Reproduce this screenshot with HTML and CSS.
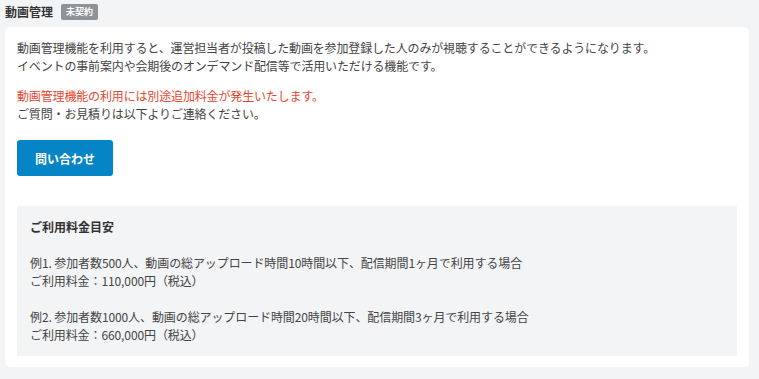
FILE: index.html
```html
<!DOCTYPE html>
<html lang="ja">
<head>
<meta charset="utf-8">
<link rel="stylesheet" href="styles.css">
</head>
<body>
<div class="page">
  <div class="header">
    <h2 class="title">動画管理</h2>
    <span class="badge">未契約</span>
  </div>
  <div class="card">
    <p class="para">動画管理機能を利用すると、運営担当者が投稿した動画を参加登録した人のみが視聴することができるようになります。<br>イベントの事前案内や会期後のオンデマンド配信等で活用いただける機能です。</p>
    <p class="para"><span class="warn">動画管理機能の利用には別途追加料金が発生いたします。</span><br>ご質問・お見積りは以下よりご連絡ください。</p>
    <button class="btn">問い合わせ</button>
    <div class="pricebox">
      <p class="pricetitle">ご利用料金目安</p>
      <p class="example">例1. 参加者数500人、動画の総アップロード時間10時間以下、配信期間1ヶ月で利用する場合<br>ご利用料金：110,000円（税込）</p>
      <p class="example">例2. 参加者数1000人、動画の総アップロード時間20時間以下、配信期間3ヶ月で利用する場合<br>ご利用料金：660,000円（税込）</p>
    </div>
  </div>
</div>
</body>
</html>
```
FILE: styles.css
```css
* { box-sizing: border-box; }
html, body {
  margin: 0;
  padding: 0;
  background: #f3f4f6;
}
body {
  font-family: "Noto Sans CJK JP", "Noto Sans", sans-serif;
  color: #444;
  font-size: 12px;
  line-height: 18px;
}
.page {
  padding: 3px 10px 0 5px;
}
.header {
  display: flex;
  align-items: center;
  gap: 8px;
  height: 17px;
  margin-bottom: 7px;
}
.title {
  margin: 0;
  font-size: 12px;
  font-weight: 700;
  color: #333;
  line-height: 17px;
}
.badge {
  display: inline-block;
  background: #8e9398;
  color: #fff;
  font-size: 9px;
  font-weight: 700;
  line-height: 16px;
  height: 16px;
  padding: 0 5px;
  border-radius: 2px;
}
.card {
  background: #fff;
  border-radius: 5px;
  padding: 12px 12px 11px 12px;
}
.para {
  margin: 0 0 12px 0;
  letter-spacing: -0.15px;
}
.para + .para {
  margin-bottom: 17px;
}
.warn {
  color: #e5472f;
}
.btn {
  display: block;
  width: 96px;
  height: 36px;
  border: none;
  border-radius: 3px;
  background: #0584c6;
  color: #fff;
  font-family: inherit;
  font-size: 12px;
  font-weight: 700;
  padding: 0;
  margin: 0 0 30px 0;
}
.pricebox {
  background: #f3f4f6;
  padding: 12px 13px;
}
.pricetitle {
  margin: 0 0 18px 0;
  font-weight: 700;
  color: #333;
}
.example {
  margin: 0 0 18px 0;
  letter-spacing: -0.1px;
}
.example:last-child {
  margin-bottom: 0;
}
```
